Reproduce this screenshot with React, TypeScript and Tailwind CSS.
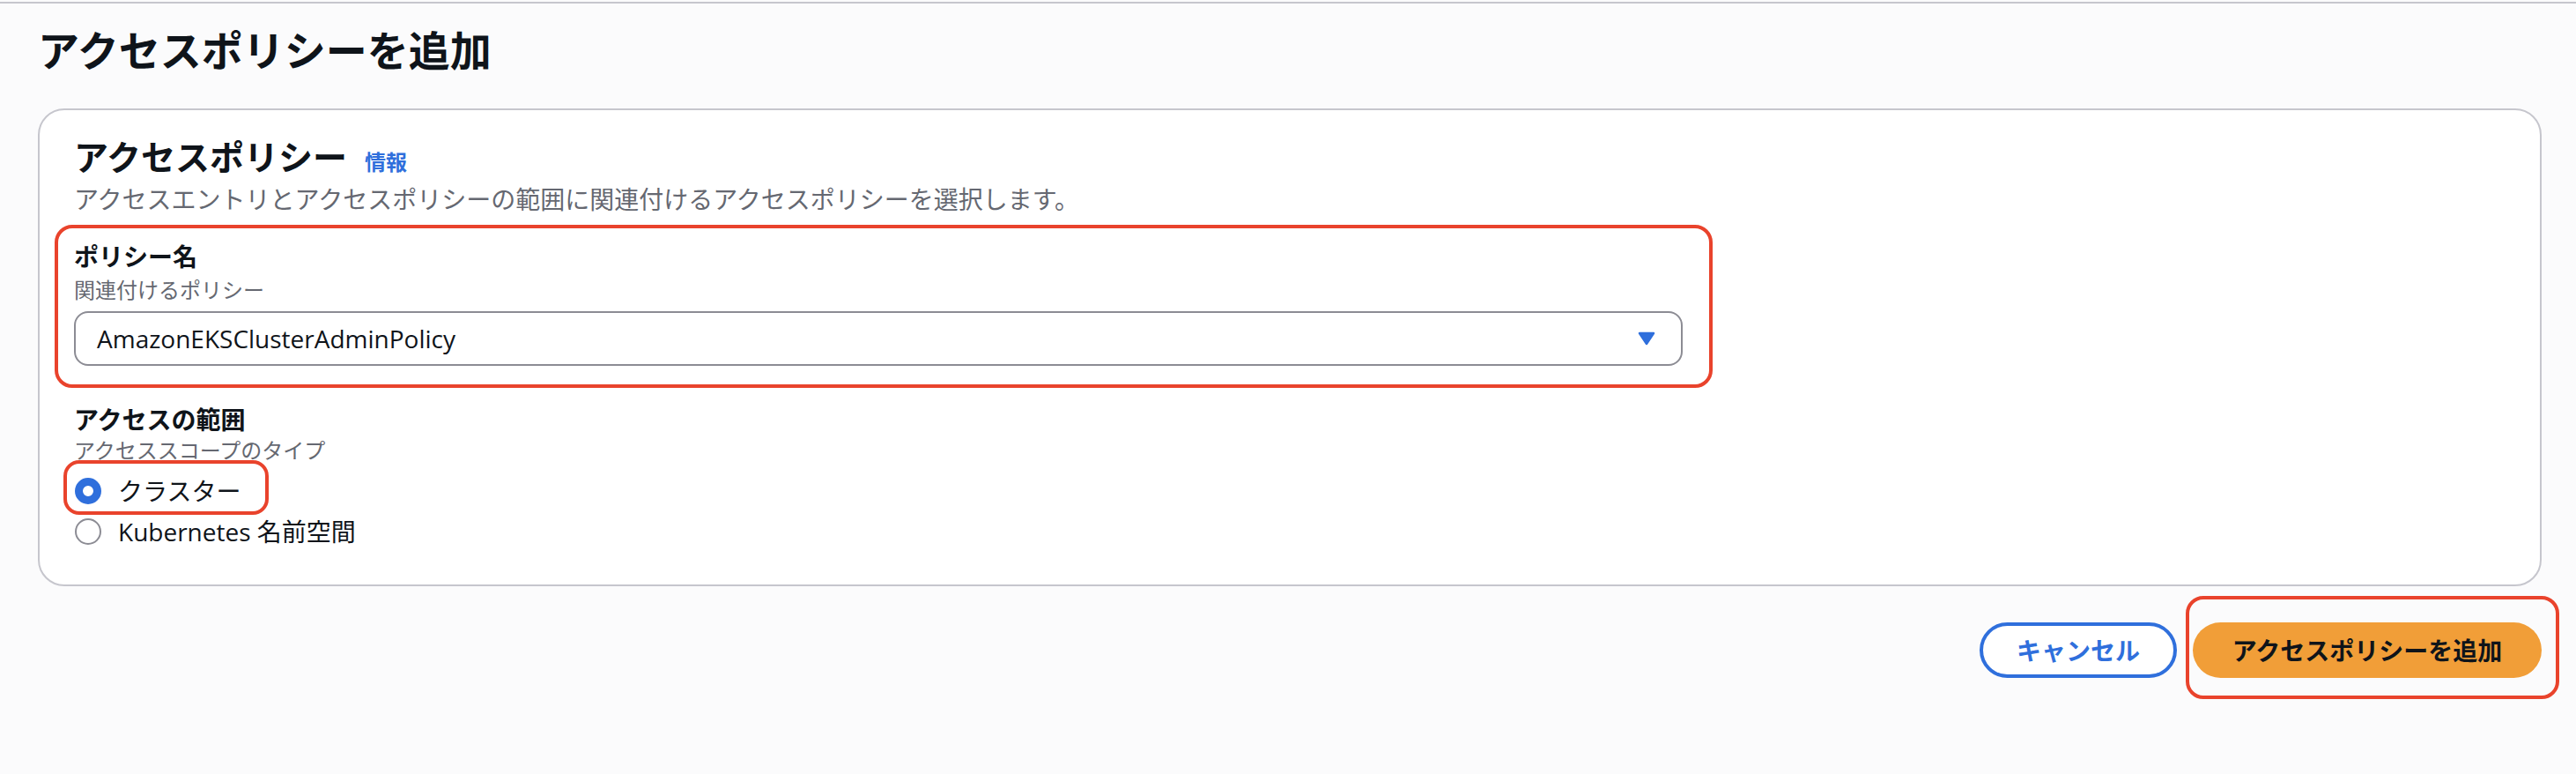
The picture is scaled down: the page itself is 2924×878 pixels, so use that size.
import React from "react";

function Radio({ checked }: { checked: boolean }) {
  return checked ? (
    <span className="block w-[30px] h-[30px] rounded-full border-[9px] border-[#2f6fdc] bg-white shrink-0" />
  ) : (
    <span className="block w-[30px] h-[30px] rounded-full border-2 border-[#8c8c94] bg-white shrink-0" />
  );
}

export default function App() {
  return (
    <div className="w-[2924px] h-[878px] overflow-hidden bg-[#fbfbfc] text-[#0f141a] font-['Open_Sans','Noto_Sans_CJK_JP',sans-serif]">
      <div className="h-[2px] mt-[2px] bg-[#c6c6cd]" />
      <div className="pl-[43px] pr-[39px]">
        <h1 className="mt-[25px] text-[47px] leading-[56px] font-bold">アクセスポリシーを追加</h1>

        <div className="mt-[38px] border-2 border-[#c6c6cd] rounded-[30px] bg-white pl-[39px] pt-[28px] pb-[37px]">
          <div className="flex items-baseline gap-[20px]">
            <h2 className="text-[39px] leading-[50px] font-bold">アクセスポリシー</h2>
            <span className="text-[24px] font-bold text-[#2f6fdc]">情報</span>
          </div>
          <p className="mt-[5px] text-[28px] leading-[36px] text-[#656871]">
            アクセスエントリとアクセスポリシーの範囲に関連付けるアクセスポリシーを選択します。
          </p>

          <div className="relative mt-[29px] w-[1826px]">
            <div className="text-[28px] leading-[36px] font-bold">ポリシー名</div>
            <div className="mt-[4px] text-[24px] leading-[32px] text-[#656871]">関連付けるポリシー</div>
            <div className="mt-[8px] h-[62px] border-2 border-[#8c8c94] rounded-[16px] bg-white pl-[24px] pr-[29px] flex items-center justify-between">
              <span className="text-[28px] leading-[36px]">AmazonEKSClusterAdminPolicy</span>
              <svg width="20" height="16" viewBox="0 0 20 16">
                <path d="M2 2 H18 L10 14 Z" fill="#2f6fdc" stroke="#2f6fdc" strokeWidth="2.5" strokeLinejoin="round" />
              </svg>
            </div>
            <div className="absolute -left-[22px] -top-[18px] -right-[34px] -bottom-[25px] border-4 border-[#e9432c] rounded-[20px] pointer-events-none" />
          </div>

          <div className="mt-[43px] text-[28px] leading-[36px] font-bold">アクセスの範囲</div>
          <div className="mt-[1px] text-[24px] leading-[32px] text-[#656871]">アクセススコープのタイプ</div>
          <div className="mt-[7px] flex flex-col">
            <div className="relative h-[46px] flex items-center gap-[19px] pl-[1px]">
              <Radio checked />
              <span className="text-[28px] leading-[36px]">クラスター</span>
              <div className="absolute -left-[12px] -top-[12px] w-[233px] h-[62px] border-4 border-[#e9432c] rounded-[18px] pointer-events-none" />
            </div>
            <div className="h-[46px] flex items-center gap-[19px] pl-[1px]">
              <Radio checked={false} />
              <span className="text-[28px] leading-[36px]">Kubernetes 名前空間</span>
            </div>
          </div>
        </div>

        <div className="mt-[41px] flex justify-end gap-[18px]">
          <button className="w-[224px] h-[63px] rounded-full border-4 border-[#2f6fdc] bg-white text-[28px] font-bold text-[#2f6fdc] flex items-center justify-center">
            キャンセル
          </button>
          <div className="relative">
            <button className="w-[396px] h-[63px] rounded-full bg-[#f19e38] text-[28px] font-bold text-[#0f141a] flex items-center justify-center">
              アクセスポリシーを追加
            </button>
            <div className="absolute -left-[8px] -top-[30px] -right-[20px] -bottom-[24px] border-4 border-[#e9432c] rounded-[20px] pointer-events-none" />
          </div>
        </div>
      </div>
    </div>
  );
}
